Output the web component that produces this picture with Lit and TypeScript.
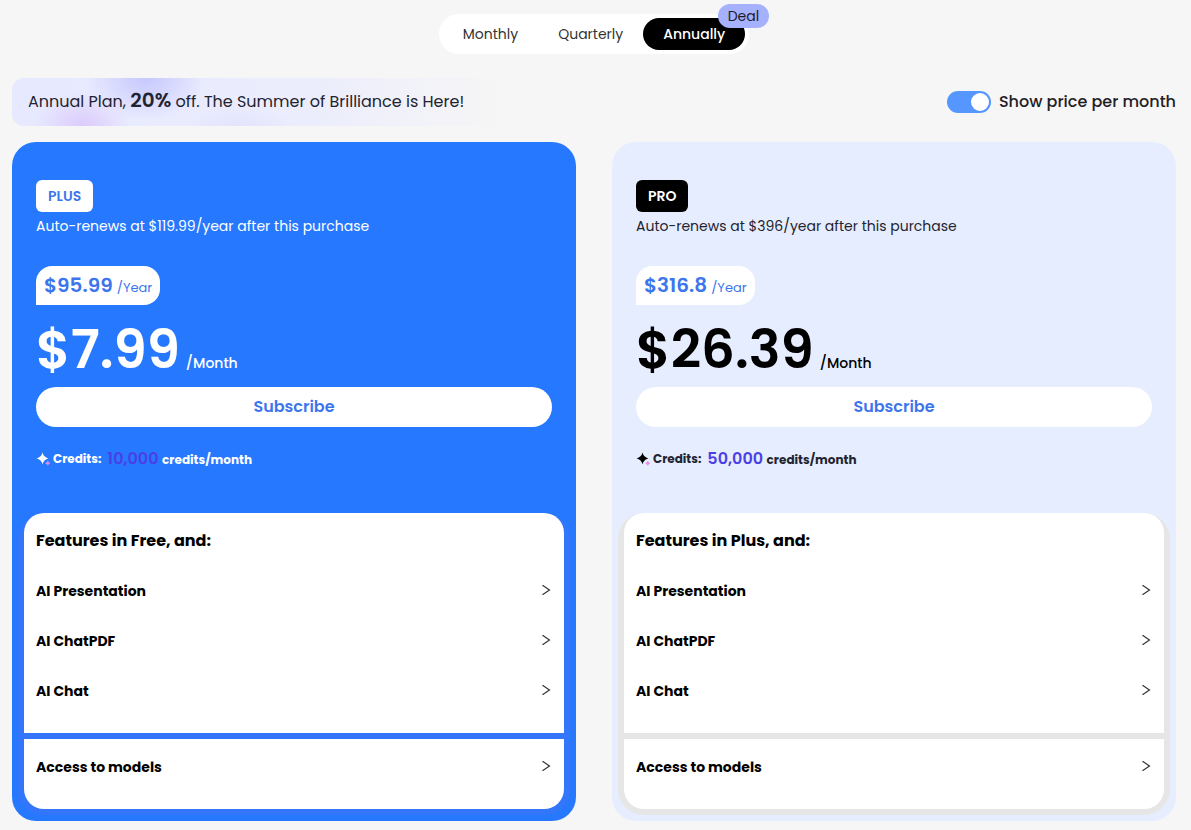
import { LitElement, html, css, svg } from "lit";
import { customElement, property, state } from "lit/decorators.js";
import { classMap } from "lit/directives/class-map.js";

interface Plan {
  id: string;
  name: string;
  renew: string;
  yearly: string;
  monthly: string;
  credits: string;
  heading: string;
}

const PLANS: Plan[] = [
  { id: "plus", name: "PLUS", renew: "$119.99", yearly: "$95.99", monthly: "$7.99", credits: "10,000", heading: "Features in Free, and:" },
  { id: "pro", name: "PRO", renew: "$396", yearly: "$316.8", monthly: "$26.39", credits: "50,000", heading: "Features in Plus, and:" },
];

const FEATURES = ["AI Presentation", "AI ChatPDF", "AI Chat"];
const PERIODS = ["Monthly", "Quarterly", "Annually"];

const chevron = html`<svg class="chevron" width="10" height="12" viewBox="0 0 10 12" aria-hidden="true">
  ${svg`<path d="M1.5 1.2 L8.5 6 L1.5 10.8" fill="none" stroke="#333" stroke-width="1.2" />`}
</svg>`;

@customElement("plan-card")
export class PlanCard extends LitElement {
  @property({ attribute: false }) plan!: Plan;

  static styles = css`
    :host { display: block; }
    * { box-sizing: border-box; }
    button { font: inherit; border: 0; cursor: pointer; }
    .card {
      --blue: #3d76ec;
      --ink: #1f2430;
      --strong: #000;
      --frame: #e6e6e6;
      background: #e6edff;
      color: var(--ink);
      border-radius: 24px;
      padding: 38px 6px 6px;
    }
    .card.plus {
      --ink: #fff;
      --strong: #fff;
      --frame: #3376fa;
      background: #2678ff;
    }
    .top { padding: 0 18px; }
    .name {
      display: flex;
      align-items: center;
      width: fit-content;
      height: 32px;
      margin: 0;
      padding: 0 12px;
      border-radius: 6px;
      font-size: 14px;
      font-weight: 600;
      background: #000;
      color: #fff;
    }
    .plus .name { background: #fff; color: var(--blue); }
    .renew { margin: 0; font-size: 14px; line-height: 28px; }
    .year {
      display: flex;
      align-items: baseline;
      gap: 4px;
      width: fit-content;
      height: 39px;
      margin: 26px 0 0;
      padding: 0 8px;
      border-radius: 16px 16px 16px 0;
      background: #fff;
      color: var(--blue);
      font-size: 13px;
      line-height: 39px;
    }
    .year strong { font-size: 20px; font-weight: 600; }
    .month {
      display: flex;
      align-items: baseline;
      gap: 6px;
      height: 82px;
      margin: 0;
      padding-top: 6px;
      color: var(--strong);
      font-size: 14px;
      font-weight: 500;
      line-height: 78px;
    }
    .month strong { font-size: 53px; font-weight: 600; }
    .subscribe {
      display: block;
      width: 100%;
      height: 40px;
      padding: 0 0 2px;
      border-radius: 20px;
      background: #fff;
      color: var(--blue);
      font-size: 16px;
      font-weight: 600;
    }
    .credits {
      display: flex;
      align-items: center;
      height: 64px;
      margin: 0 0 22px;
      font-size: 12px;
      font-weight: 700;
      line-height: 24px;
    }
    .spark { margin-right: 2px; }
    .amount { margin-left: 6px; }
    .amount strong { margin-right: 1px; font-size: 16px; font-weight: 600; color: #4b3fe6; }
    .frame {
      display: grid;
      gap: 6px;
      padding: 0 6px 6px;
      border-radius: 26px;
      background: var(--frame);
    }
    .group { padding: 3px 12px 17px; background: #fff; color: #000; }
    .group.first { padding-top: 2px; border-radius: 20px 20px 0 0; }
    .group.last { border-radius: 0 0 20px 20px; }
    .heading { margin: 0; font-size: 16px; font-weight: 700; line-height: 51px; }
    .row {
      display: flex;
      align-items: center;
      justify-content: space-between;
      width: 100%;
      height: 50px;
      padding: 0 1px 0 0;
      background: none;
      color: #000;
      font-size: 14px;
      font-weight: 700;
      text-align: left;
    }
    .chevron { margin-bottom: 2px; }
  `;

  private row(label: string) {
    return html`<button class="row" type="button"><span>${label}</span>${chevron}</button>`;
  }

  render() {
    const p = this.plan;
    return html`<article class=${classMap({ card: true, [p.id]: true })}>
      <div class="top">
        <h2 class="name">${p.name}</h2>
        <p class="renew">Auto-renews at ${p.renew}/year after this purchase</p>
        <p class="year"><strong>${p.yearly}</strong><span>/Year</span></p>
        <p class="month"><strong>${p.monthly}</strong><span>/Month</span></p>
        <button class="subscribe" type="button">Subscribe</button>
        <p class="credits">
          <svg class="spark" width="15" height="14" viewBox="0 0 15 14" aria-hidden="true">
            <path d="M6.5 .6 Q7.6 5.4 12.4 6.4 Q7.6 7.4 6.5 12.2 Q5.4 7.4 .6 6.4 Q5.4 5.4 6.5 .6Z" fill="var(--strong)" />
            <path d="M11.8 9 Q12.2 10.8 14 11.2 Q12.2 11.6 11.8 13.4 Q11.4 11.6 9.6 11.2 Q11.4 10.8 11.8 9Z" fill="#e88cf5" stroke="#e88cf5" stroke-width=".6" />
          </svg>
          <span>Credits:</span><span class="amount"><strong>${p.credits}</strong> credits/month</span>
        </p>
      </div>
      <div class="frame">
        <section class="group first">
          <h3 class="heading">${p.heading}</h3>
          ${FEATURES.map((f) => this.row(f))}
        </section>
        <section class="group last">${this.row("Access to models")}</section>
      </div>
    </article>`;
  }
}

@customElement("app-root")
export class AppRoot extends LitElement {
  @state() private period = "Annually";
  @state() private perMonth = true;

  static styles = css`
    :host {
      display: block;
      min-height: 100vh;
      box-sizing: border-box;
      padding: 14px 15px 9px 12px;
      background: #f6f6f6;
      color: #1f2024;
      font-family: Poppins, Inter, "Open Sans", sans-serif;
    }
    * { box-sizing: border-box; }
    .tabs {
      display: flex;
      width: fit-content;
      margin: 0 auto;
      padding: 4px;
      border-radius: 20px;
      background: #fff;
    }
    .slot { position: relative; }
    .tab {
      height: 32px;
      padding: 0 20px;
      border: 0;
      border-radius: 16px;
      background: none;
      color: #333;
      font: inherit;
      font-size: 14px;
      cursor: pointer;
    }
    .tab.active { background: #000; color: #fff; font-weight: 500; }
    .deal {
      position: absolute;
      top: -14px;
      right: -24px;
      padding: 0 10px;
      border-radius: 12px;
      background: #a5b1fc;
      color: #1b1b2b;
      font-size: 14px;
      line-height: 24px;
    }
    .bar {
      display: flex;
      align-items: center;
      justify-content: space-between;
      margin: 24px 0 16px;
    }
    .promo {
      display: flex;
      align-items: center;
      width: 500px;
      height: 48px;
      margin: 0;
      padding: 0 16px 2px;
      border-radius: 12px;
      font-size: 16px;
      line-height: 24px;
      white-space: nowrap;
      color: #1f2430;
      background:
        radial-gradient(ellipse 60px 42px at 134px 0, #c6c8fd, #c6c8fd00),
        radial-gradient(ellipse 48px 34px at 70px 48px, #dccbfb, #dccbfb00),
        radial-gradient(ellipse 56px 20px at 226px 48px, #e3e4fd, #e3e4fd00),
        linear-gradient(90deg, #e6e9ff, #ecedfc 60%, #f6f6f6 98%);
    }
    .promo strong { font-size: 20px; font-weight: 600; }
    .toggle {
      display: flex;
      align-items: center;
      gap: 8px;
      font-size: 16px;
      line-height: 22px;
      font-weight: 500;
      cursor: pointer;
    }
    .switch {
      appearance: none;
      display: flex;
      width: 44px;
      height: 22px;
      margin: 0;
      padding: 2px;
      border-radius: 11px;
      background: #bfbfbf;
      cursor: pointer;
    }
    .switch::before {
      content: "";
      width: 18px;
      height: 18px;
      border-radius: 50%;
      background: #fff;
    }
    .switch:checked { justify-content: flex-end; background: #5596ff; }
    .plans { display: grid; grid-template-columns: 1fr 1fr; gap: 36px; }
  `;

  render() {
    return html`
      <nav class="tabs" aria-label="Billing period">
        ${PERIODS.map(
          (name) => html`<div class="slot">
            <button
              type="button"
              class=${classMap({ tab: true, active: name === this.period })}
              aria-pressed=${name === this.period}
              @click=${() => (this.period = name)}
            >${name}</button>
            ${name === "Annually" ? html`<span class="deal">Deal</span>` : ""}
          </div>`
        )}
      </nav>
      <div class="bar">
        <p class="promo"><span>Annual Plan, <strong>20%</strong> off. The Summer of Brilliance is Here!</span></p>
        <label class="toggle">
          <input
            class="switch"
            type="checkbox"
            role="switch"
            .checked=${this.perMonth}
            @change=${(e: Event) => (this.perMonth = (e.target as HTMLInputElement).checked)}
          />
          <span>Show price per month</span>
        </label>
      </div>
      <main class="plans">${PLANS.map((p) => html`<plan-card .plan=${p}></plan-card>`)}</main>
    `;
  }
}
